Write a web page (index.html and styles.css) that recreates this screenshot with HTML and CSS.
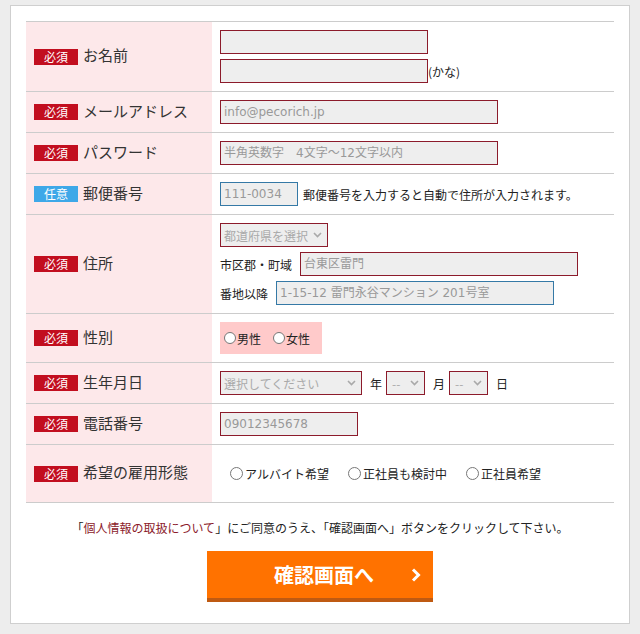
FILE: index.html
```html
<!DOCTYPE html>
<html lang="ja">
<head>
    <meta charset="UTF-8">
    <meta name="viewport" content="width=device-width, initial-scale=1.0">
    <title>応募フォーム</title>
    <link rel="stylesheet" href="styles.css">
</head>
<body>
    <div class="form-box">
        <form id="entryForm">
            <div class="form-table">
                <div class="form-row">
                    <div class="row-head"><span class="badge">必須</span><span class="row-title">お名前</span></div>
                    <div class="row-body stack">
                        <div><input type="text" class="field w-name" name="name"></div>
                        <div><input type="text" class="field w-name" name="kana"><span class="note">(かな)</span></div>
                    </div>
                </div>

                <div class="form-row">
                    <div class="row-head"><span class="badge">必須</span><span class="row-title">メールアドレス</span></div>
                    <div class="row-body">
                        <input type="email" class="field w-long" name="email" placeholder="info@pecorich.jp">
                    </div>
                </div>

                <div class="form-row">
                    <div class="row-head"><span class="badge">必須</span><span class="row-title">パスワード</span></div>
                    <div class="row-body">
                        <input type="password" class="field w-long" name="password" placeholder="半角英数字　4文字～12文字以内">
                    </div>
                </div>

                <div class="form-row">
                    <div class="row-head"><span class="badge badge-any">任意</span><span class="row-title">郵便番号</span></div>
                    <div class="row-body">
                        <input type="text" class="field field-blue w-zip" name="zip" placeholder="111-0034">
                        <span class="hint">郵便番号を入力すると自動で住所が入力されます。</span>
                    </div>
                </div>

                <div class="form-row">
                    <div class="row-head"><span class="badge">必須</span><span class="row-title">住所</span></div>
                    <div class="row-body stack">
                        <div>
                            <span class="select-wrap">
                                <select class="field select w-pref" name="pref">
                                    <option>都道府県を選択</option>
                                </select>
                                <svg class="chev" width="9" height="6" viewBox="0 0 9 6"><polyline points="1,1 4.5,4.5 8,1" fill="none" stroke="#a9a9a9" stroke-width="1.6"/></svg>
                            </span>
                        </div>
                        <div class="inline-field">
                            <span class="sub-label">市区郡・町域</span>
                            <input type="text" class="field w-long" name="city" placeholder="台東区雷門">
                        </div>
                        <div class="inline-field">
                            <span class="sub-label">番地以降</span>
                            <input type="text" class="field field-blue w-long" name="street" placeholder="1-15-12 雷門永谷マンション 201号室">
                        </div>
                    </div>
                </div>

                <div class="form-row">
                    <div class="row-head"><span class="badge">必須</span><span class="row-title">性別</span></div>
                    <div class="row-body">
                        <div class="gender-box">
                            <label class="radio"><input type="radio" name="sex">男性</label>
                            <label class="radio"><input type="radio" name="sex">女性</label>
                        </div>
                    </div>
                </div>

                <div class="form-row">
                    <div class="row-head"><span class="badge">必須</span><span class="row-title">生年月日</span></div>
                    <div class="row-body inline-field">
                        <span class="select-wrap">
                            <select class="field select w-year" name="year">
                                <option>選択してください</option>
                            </select>
                            <svg class="chev" width="9" height="6" viewBox="0 0 9 6"><polyline points="1,1 4.5,4.5 8,1" fill="none" stroke="#a9a9a9" stroke-width="1.6"/></svg>
                        </span>
                        <span class="unit">年</span>
                        <span class="select-wrap">
                            <select class="field select w-small" name="month">
                                <option>--</option>
                            </select>
                            <svg class="chev" width="9" height="6" viewBox="0 0 9 6"><polyline points="1,1 4.5,4.5 8,1" fill="none" stroke="#a9a9a9" stroke-width="1.6"/></svg>
                        </span>
                        <span class="unit">月</span>
                        <span class="select-wrap">
                            <select class="field select w-small" name="day">
                                <option>--</option>
                            </select>
                            <svg class="chev" width="9" height="6" viewBox="0 0 9 6"><polyline points="1,1 4.5,4.5 8,1" fill="none" stroke="#a9a9a9" stroke-width="1.6"/></svg>
                        </span>
                        <span class="unit">日</span>
                    </div>
                </div>

                <div class="form-row">
                    <div class="row-head"><span class="badge">必須</span><span class="row-title">電話番号</span></div>
                    <div class="row-body">
                        <input type="tel" class="field w-tel" name="tel" placeholder="09012345678">
                    </div>
                </div>

                <div class="form-row">
                    <div class="row-head"><span class="badge">必須</span><span class="row-title">希望の雇用形態</span></div>
                    <div class="row-body work-types">
                        <label class="radio radio-lg"><input type="radio" name="work">アルバイト希望</label>
                        <label class="radio radio-lg"><input type="radio" name="work">正社員も検討中</label>
                        <label class="radio radio-lg"><input type="radio" name="work">正社員希望</label>
                    </div>
                </div>
            </div>

            <p class="agree">「<a href="#">個人情報の取扱について</a>」にご同意のうえ、「確認画面へ」ボタンをクリックして下さい。</p>

            <div class="submit-area">
                <button type="submit" class="btn-submit">
                    <span>確認画面へ</span>
                    <svg width="10" height="14" viewBox="0 0 10 14"><polyline points="2,1.5 7.5,7 2,12.5" fill="none" stroke="#fff" stroke-width="3"/></svg>
                </button>
            </div>
        </form>
    </div>
</body>
</html>
```

FILE: styles.css
```css
* {
    margin: 0;
    padding: 0;
    box-sizing: border-box;
}

body {
    font-family: "Noto Sans CJK JP", sans-serif;
    background: #ededed;
    color: #333;
    padding: 5px 10px;
}

.form-box {
    width: 620px;
    background: #fff;
    border: 1px solid #cfcfcf;
    padding: 15px 15px 21px;
}

.form-table {
    border-top: 1px solid #ccc;
}

.form-row {
    display: grid;
    grid-template-columns: 186px 1fr;
    border-bottom: 1px solid #ccc;
}

.row-head {
    background: #fde8ea;
    display: flex;
    align-items: center;
    padding-left: 8px;
}

.badge {
    display: inline-block;
    width: 44px;
    height: 16px;
    line-height: 16px;
    background: #c20e1f;
    color: #fff;
    font-size: 12px;
    text-align: center;
}

.badge-any {
    background: #3ea8e8;
}

.row-title {
    margin-left: 5px;
    margin-bottom: 4px;
    font-size: 15px;
    color: #333;
}

.row-body {
    padding: 8px;
    display: flex;
    align-items: center;
    font-size: 12px;
}

.row-body.stack {
    flex-direction: column;
    align-items: flex-start;
    gap: 5px;
}

.stack > div {
    display: flex;
    align-items: center;
}

.field {
    height: 24px;
    border: 1px solid #8c1b2b;
    background: #eee;
    font-family: "DejaVu Sans", "Noto Sans CJK JP", sans-serif;
    font-size: 12px;
    color: #555;
    padding: 0 3px;
    outline: none;
}

.field::placeholder {
    color: #999;
}

.field-blue {
    border-color: #3579a6;
}

.w-name { width: 208px; }
.w-long { width: 278px; }
.w-zip { width: 78px; }
.w-tel { width: 138px; }
.w-pref { width: 108px; }
.w-year { width: 142px; }
.w-small { width: 39px; padding-left: 5px; }

.note {
    font-size: 12px;
    color: #222;
}

.hint {
    margin-left: 5px;
    color: #222;
}

.sub-label {
    margin-right: 8px;
    color: #222;
}

.inline-field {
    display: flex;
    align-items: center;
}

.select-wrap {
    position: relative;
    display: inline-block;
    height: 24px;
}

.select {
    appearance: none;
    -webkit-appearance: none;
    color: #aaa;
    font-family: "Noto Sans CJK JP", sans-serif;
    border-radius: 0;
}

.chev {
    position: absolute;
    right: 6px;
    top: 9px;
    pointer-events: none;
}

.unit {
    color: #222;
    margin: 0 4px 0 8px;
}

.gender-box {
    display: flex;
    align-items: center;
    height: 32px;
    width: 102px;
    background: #ffcaca;
    padding-left: 4px;
}

.radio {
    display: inline-flex;
    align-items: center;
    color: #222;
    font-size: 12px;
}

.radio + .radio {
    margin-left: 12px;
}

.radio input {
    appearance: none;
    -webkit-appearance: none;
    width: 12px;
    height: 12px;
    border: 1px solid #777;
    border-radius: 50%;
    background: #fff;
    margin-right: 1px;
}

.work-types {
    height: 57px;
    padding-left: 18px;
}

.radio-lg input {
    width: 13px;
    height: 13px;
    margin-right: 2px;
}

.radio-lg + .radio-lg {
    margin-left: 19px;
}

.agree {
    margin-top: 16px;
    text-align: center;
    font-size: 12px;
    line-height: 18px;
    color: #222;
}

.agree a {
    color: #8c1b2b;
    text-decoration: none;
}

.submit-area {
    margin-top: 14px;
    display: flex;
    justify-content: center;
}

.btn-submit {
    width: 226px;
    height: 51px;
    display: flex;
    align-items: center;
    justify-content: space-between;
    padding: 0 12px 0 67px;
    background: #ff7200;
    border: none;
    border-bottom: 4px solid #bf5a12;
    color: #fff;
    font-family: "Noto Sans CJK JP", sans-serif;
    font-size: 20px;
    font-weight: bold;
    cursor: pointer;
}
```
